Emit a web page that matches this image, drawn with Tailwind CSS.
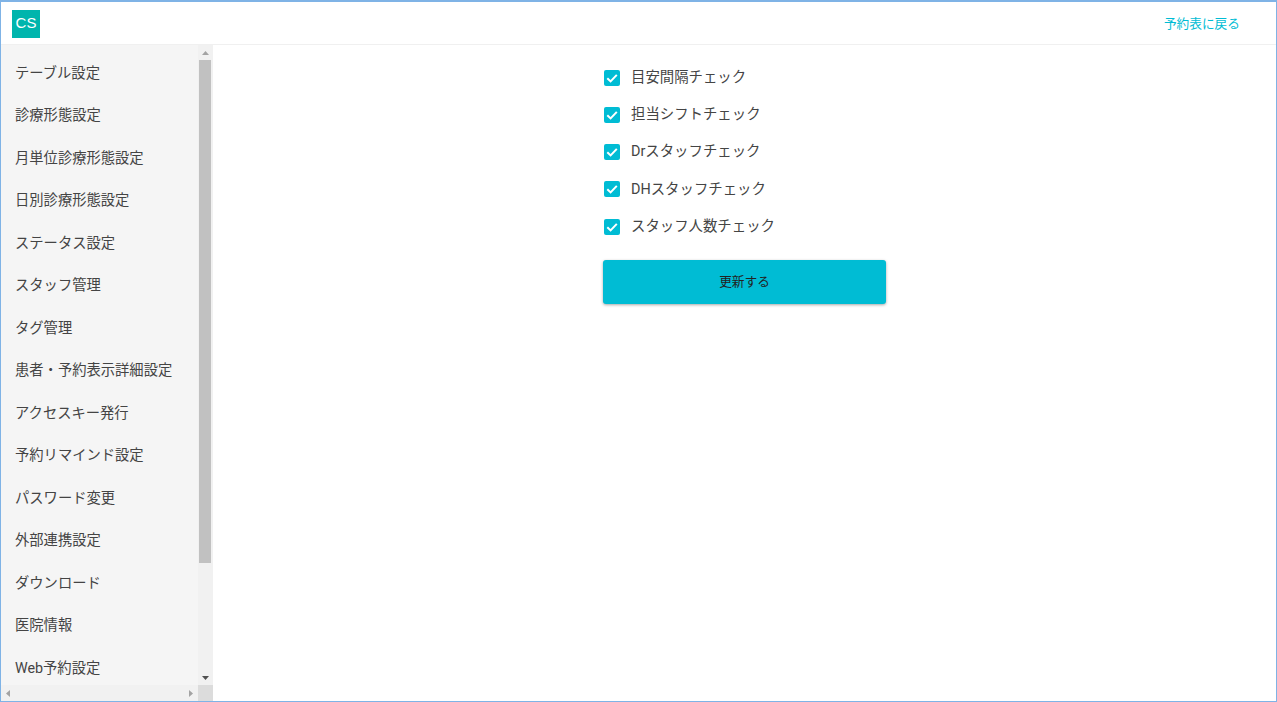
<!DOCTYPE html>
<html lang="ja">
<head>
  <meta charset="UTF-8" />
  <title>設定</title>
  <script src="https://cdn.jsdelivr.net/npm/@tailwindcss/browser@4"></script>
</head>
<body class="bg-white font-['Roboto','Noto_Sans_CJK_JP',sans-serif] text-[#333]">
  <div class="h-[702px] w-[1277px] overflow-hidden border border-t-2 border-[#7fb3e6] flex flex-col">

    <!-- header -->
    <header class="h-[43px] shrink-0 flex items-center justify-between border-b border-[#f0f0f0] pt-[1px] pl-[11px] pr-[36px]">
      <div class="w-[28px] h-[28px] bg-[#00b5ad] text-white text-[15px] flex items-center justify-center font-['Liberation_Sans',sans-serif]">CS</div>
      <a href="#" class="text-[12.7px] text-[#00bcd4]">予約表に戻る</a>
    </header>

    <div class="flex flex-1 min-h-0">
      <!-- sidebar -->
      <aside class="w-[212px] shrink-0 flex flex-col bg-[#f5f5f5]">
        <div class="flex flex-1 min-h-0">
          <ul class="flex-1 overflow-hidden pt-[7px] pl-[14px] text-[14.3px] text-[#444] whitespace-nowrap">
            <li class="h-[42.5px] flex items-center">テーブル設定</li>
            <li class="h-[42.5px] flex items-center">診療形態設定</li>
            <li class="h-[42.5px] flex items-center">月単位診療形態設定</li>
            <li class="h-[42.5px] flex items-center">日別診療形態設定</li>
            <li class="h-[42.5px] flex items-center">ステータス設定</li>
            <li class="h-[42.5px] flex items-center">スタッフ管理</li>
            <li class="h-[42.5px] flex items-center">タグ管理</li>
            <li class="h-[42.5px] flex items-center">患者・予約表示詳細設定</li>
            <li class="h-[42.5px] flex items-center">アクセスキー発行</li>
            <li class="h-[42.5px] flex items-center">予約リマインド設定</li>
            <li class="h-[42.5px] flex items-center">パスワード変更</li>
            <li class="h-[42.5px] flex items-center">外部連携設定</li>
            <li class="h-[42.5px] flex items-center">ダウンロード</li>
            <li class="h-[42.5px] flex items-center">医院情報</li>
            <li class="h-[42.5px] flex items-center">Web予約設定</li>
          </ul>
          <!-- vertical scrollbar -->
          <div class="w-[15px] shrink-0 bg-[#f1f1f1] flex flex-col items-stretch">
            <div class="h-[15px] flex items-center justify-center">
              <svg width="7" height="4" viewBox="0 0 7 4"><path d="M3.5 0L7 4H0z" fill="#a3a3a3"/></svg>
            </div>
            <div class="h-[503px] bg-[#c1c1c1] ml-[1px] mr-[2px]"></div>
            <div class="flex-1 flex items-end justify-center pb-[5px]">
              <svg width="7" height="4" viewBox="0 0 7 4"><path d="M0 0H7L3.5 4z" fill="#505050"/></svg>
            </div>
          </div>
        </div>
        <!-- horizontal scrollbar -->
        <div class="h-[16px] shrink-0 flex">
          <div class="flex-1 bg-[#f1f1f1] flex items-center justify-between px-[5px]">
            <svg width="4" height="7" viewBox="0 0 4 7"><path d="M4 0V7L0 3.5z" fill="#a3a3a3"/></svg>
            <svg width="4" height="7" viewBox="0 0 4 7"><path d="M0 0L4 3.5 0 7z" fill="#a3a3a3"/></svg>
          </div>
          <div class="w-[15px] bg-[#dcdcdc]"></div>
        </div>
      </aside>

      <!-- main -->
      <main class="flex-1 pl-[390px] pt-[14px]">
        <div class="w-[284px] text-[14.4px] text-[#444]">
          <label class="h-[37.25px] flex items-center gap-[11px] pl-[1px]">
            <span class="w-[16px] h-[16px] rounded-[2px] bg-[#00bcd4] flex items-center justify-center">
              <svg width="12" height="12" viewBox="0 0 12 12"><path d="M1.3 6.2L4.6 9.4 10.8 2.9" fill="none" stroke="#fff" stroke-width="2"/></svg>
            </span>
            目安間隔チェック
          </label>
          <label class="h-[37.25px] flex items-center gap-[11px] pl-[1px]">
            <span class="w-[16px] h-[16px] rounded-[2px] bg-[#00bcd4] flex items-center justify-center">
              <svg width="12" height="12" viewBox="0 0 12 12"><path d="M1.3 6.2L4.6 9.4 10.8 2.9" fill="none" stroke="#fff" stroke-width="2"/></svg>
            </span>
            担当シフトチェック
          </label>
          <label class="h-[37.25px] flex items-center gap-[11px] pl-[1px]">
            <span class="w-[16px] h-[16px] rounded-[2px] bg-[#00bcd4] flex items-center justify-center">
              <svg width="12" height="12" viewBox="0 0 12 12"><path d="M1.3 6.2L4.6 9.4 10.8 2.9" fill="none" stroke="#fff" stroke-width="2"/></svg>
            </span>
            Drスタッフチェック
          </label>
          <label class="h-[37.25px] flex items-center gap-[11px] pl-[1px]">
            <span class="w-[16px] h-[16px] rounded-[2px] bg-[#00bcd4] flex items-center justify-center">
              <svg width="12" height="12" viewBox="0 0 12 12"><path d="M1.3 6.2L4.6 9.4 10.8 2.9" fill="none" stroke="#fff" stroke-width="2"/></svg>
            </span>
            DHスタッフチェック
          </label>
          <label class="h-[37.25px] flex items-center gap-[11px] pl-[1px]">
            <span class="w-[16px] h-[16px] rounded-[2px] bg-[#00bcd4] flex items-center justify-center">
              <svg width="12" height="12" viewBox="0 0 12 12"><path d="M1.3 6.2L4.6 9.4 10.8 2.9" fill="none" stroke="#fff" stroke-width="2"/></svg>
            </span>
            スタッフ人数チェック
          </label>
          <button class="mt-[15px] w-[283px] h-[44px] pb-[2px] rounded-[3px] bg-[#00bcd4] text-[12.7px] text-[#222] shadow-[0_1px_3px_rgba(0,0,0,0.35)]">更新する</button>
        </div>
      </main>
    </div>
  </div>
</body>
</html>
